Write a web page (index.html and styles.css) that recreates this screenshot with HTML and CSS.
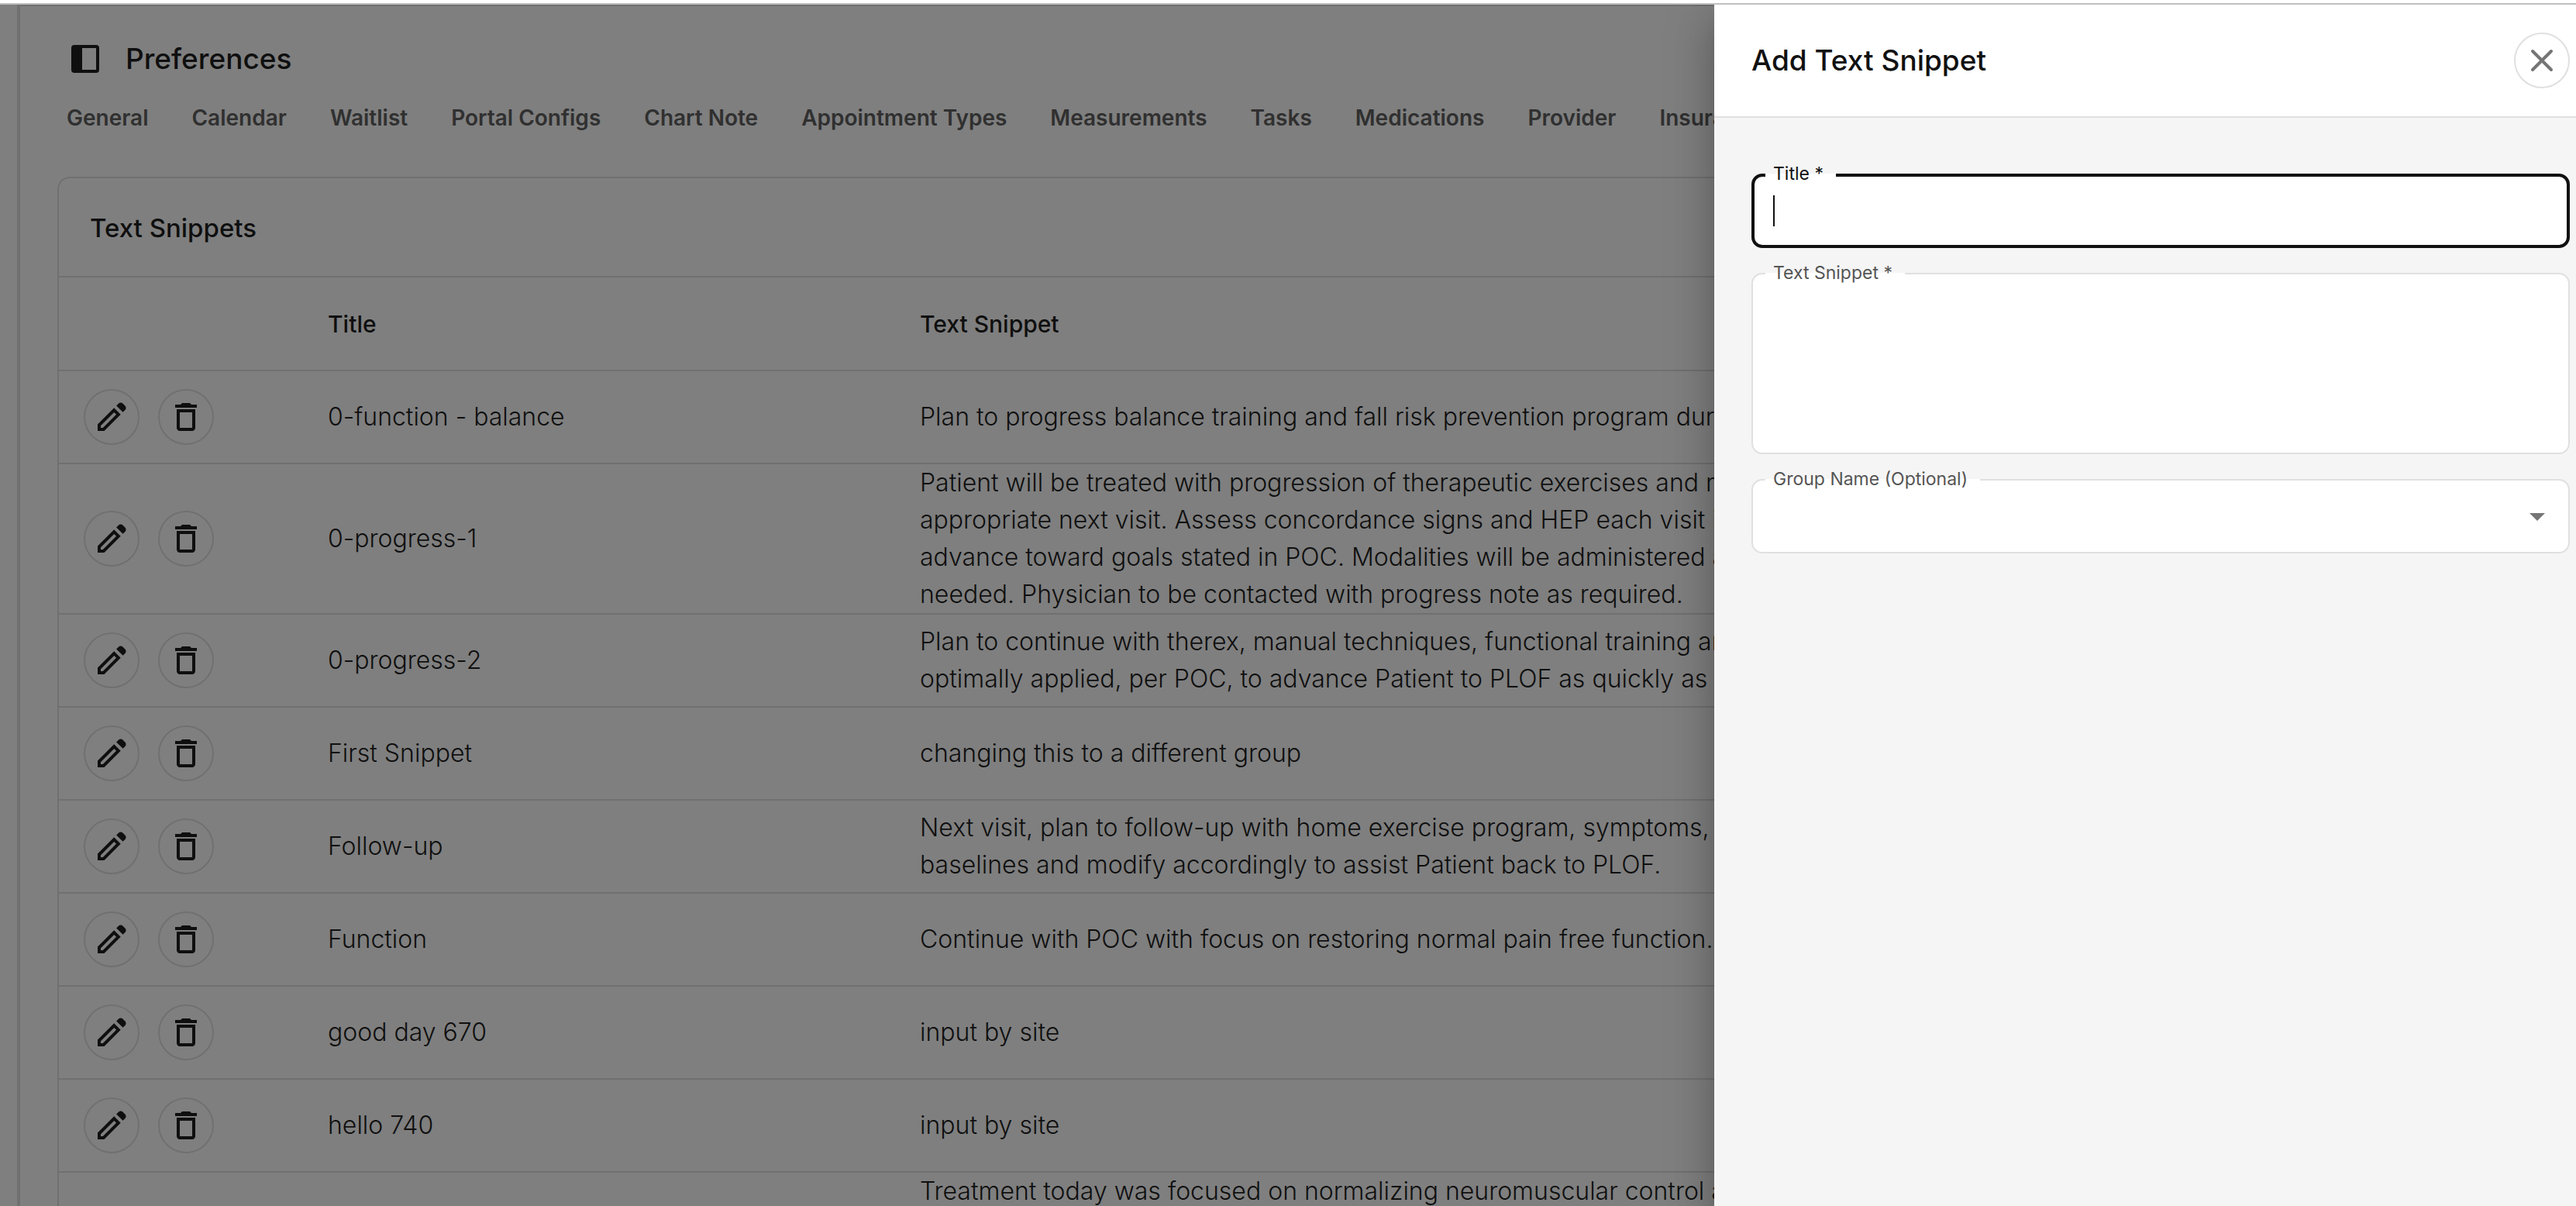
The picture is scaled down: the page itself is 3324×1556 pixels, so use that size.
FILE: index.html
```html
<!DOCTYPE html>
<html lang="en">

<head>
  <meta charset="UTF-8" />
  <meta name="viewport" content="width=device-width, initial-scale=1.0" />
  <title>Preferences - Text Snippets</title>
  <link rel="stylesheet" href="styles.css">
</head>

<body>
  <!-- Icons shared by the rows -->
  <svg class="icon-defs" aria-hidden="true">
    <symbol id="icon-panel" viewBox="0 0 24 24">
      <path fill-rule="evenodd" d="M5 3h14a2 2 0 0 1 2 2v14a2 2 0 0 1-2 2H5a2 2 0 0 1-2-2V5a2 2 0 0 1 2-2ZM10 5v14h9V5Z" />
    </symbol>
    <symbol id="icon-edit" viewBox="0 0 24 24">
      <path d="M5 19h1.400l8.625-8.625-1.400-1.400L5 17.600ZM19.300 8.925l-4.250-4.200 1.400-1.400q.575-.575 1.413-.575.837 0 1.412.575l1.400 1.400q.575.575.6 1.388.025.812-.55 1.387ZM17.850 10.400 7.250 21H3v-4.250l10.600-10.600Z" />
    </symbol>
    <symbol id="icon-delete" viewBox="0 0 24 24">
      <path d="M6 19c0 1.100.9 2 2 2h8c1.100 0 2-.9 2-2V7H6v12zM8 9h8v10H8V9zm7.500-5-1-1h-5l-1 1H5v2h14V4z" />
    </symbol>
  </svg>

  <div class="app">
    <main class="page">
      <header class="page-header">
        <button class="panel-button" type="button" aria-label="Toggle sidebar">
          <svg class="icon"><use href="#icon-panel" /></svg>
        </button>
        <h1 class="page-title">Preferences</h1>
      </header>

      <nav class="tabs">
        <a href="#">General</a>
        <a href="#">Calendar</a>
        <a href="#">Waitlist</a>
        <a href="#">Portal Configs</a>
        <a href="#">Chart Note</a>
        <a href="#">Appointment Types</a>
        <a href="#">Measurements</a>
        <a href="#">Tasks</a>
        <a href="#">Medications</a>
        <a href="#">Provider</a>
        <a href="#">Insurance</a>
      </nav>

      <section class="card">
        <h2 class="card-title">Text Snippets</h2>
        <table class="snippets">
          <colgroup>
            <col class="col-actions">
            <col class="col-title">
            <col>
          </colgroup>
          <thead>
            <tr>
              <th></th>
              <th>Title</th>
              <th>Text Snippet</th>
            </tr>
          </thead>
          <tbody>
            <tr>
              <td>
                <div class="actions">
                  <button class="round-button" type="button" aria-label="Edit"><svg class="icon"><use href="#icon-edit" /></svg></button>
                  <button class="round-button" type="button" aria-label="Delete"><svg class="icon"><use href="#icon-delete" /></svg></button>
                </div>
              </td>
              <td>0-function - balance</td>
              <td>Plan to progress balance training and fall risk prevention program during</td>
            </tr>
            <tr>
              <td>
                <div class="actions">
                  <button class="round-button" type="button" aria-label="Edit"><svg class="icon"><use href="#icon-edit" /></svg></button>
                  <button class="round-button" type="button" aria-label="Delete"><svg class="icon"><use href="#icon-delete" /></svg></button>
                </div>
              </td>
              <td>0-progress-1</td>
              <td>Patient will be treated with progression of therapeutic exercises and manual<br>appropriate next visit. Assess concordance signs and HEP each visit in order to<br>advance toward goals stated in POC. Modalities will be administered as<br>needed. Physician to be contacted with progress note as required.</td>
            </tr>
            <tr>
              <td>
                <div class="actions">
                  <button class="round-button" type="button" aria-label="Edit"><svg class="icon"><use href="#icon-edit" /></svg></button>
                  <button class="round-button" type="button" aria-label="Delete"><svg class="icon"><use href="#icon-delete" /></svg></button>
                </div>
              </td>
              <td>0-progress-2</td>
              <td>Plan to continue with therex, manual techniques, functional training and<br>optimally applied, per POC, to advance Patient to PLOF as quickly as possible.</td>
            </tr>
            <tr>
              <td>
                <div class="actions">
                  <button class="round-button" type="button" aria-label="Edit"><svg class="icon"><use href="#icon-edit" /></svg></button>
                  <button class="round-button" type="button" aria-label="Delete"><svg class="icon"><use href="#icon-delete" /></svg></button>
                </div>
              </td>
              <td>First Snippet</td>
              <td>changing this to a different group</td>
            </tr>
            <tr>
              <td>
                <div class="actions">
                  <button class="round-button" type="button" aria-label="Edit"><svg class="icon"><use href="#icon-edit" /></svg></button>
                  <button class="round-button" type="button" aria-label="Delete"><svg class="icon"><use href="#icon-delete" /></svg></button>
                </div>
              </td>
              <td>Follow-up</td>
              <td>Next visit, plan to follow-up with home exercise program, symptoms, ROM<br>baselines and modify accordingly to assist Patient back to PLOF.</td>
            </tr>
            <tr>
              <td>
                <div class="actions">
                  <button class="round-button" type="button" aria-label="Edit"><svg class="icon"><use href="#icon-edit" /></svg></button>
                  <button class="round-button" type="button" aria-label="Delete"><svg class="icon"><use href="#icon-delete" /></svg></button>
                </div>
              </td>
              <td>Function</td>
              <td>Continue with POC with focus on restoring normal pain free function.</td>
            </tr>
            <tr>
              <td>
                <div class="actions">
                  <button class="round-button" type="button" aria-label="Edit"><svg class="icon"><use href="#icon-edit" /></svg></button>
                  <button class="round-button" type="button" aria-label="Delete"><svg class="icon"><use href="#icon-delete" /></svg></button>
                </div>
              </td>
              <td>good day 670</td>
              <td>input by site</td>
            </tr>
            <tr>
              <td>
                <div class="actions">
                  <button class="round-button" type="button" aria-label="Edit"><svg class="icon"><use href="#icon-edit" /></svg></button>
                  <button class="round-button" type="button" aria-label="Delete"><svg class="icon"><use href="#icon-delete" /></svg></button>
                </div>
              </td>
              <td>hello 740</td>
              <td>input by site</td>
            </tr>
            <tr class="row-long">
              <td></td>
              <td></td>
              <td>Treatment today was focused on normalizing neuromuscular control and</td>
            </tr>
          </tbody>
        </table>
      </section>
    </main>

    <div class="backdrop"></div>

    <!-- Add snippet drawer -->
    <aside class="drawer" role="dialog" aria-labelledby="drawer-title">
      <header class="drawer-header">
        <h2 class="drawer-title" id="drawer-title">Add Text Snippet</h2>
        <button class="round-button close-button" type="button" aria-label="Close">
          <svg class="icon" viewBox="0 0 24 24"><path d="M6 6l12 12M18 6 6 18" /></svg>
        </button>
      </header>

      <form class="drawer-form">
        <div class="field focused">
          <label for="snippet-title">Title *</label>
          <input type="text" id="snippet-title" required>
          <span class="caret"></span>
        </div>
        <div class="field">
          <label for="snippet-text">Text Snippet *</label>
          <textarea id="snippet-text" required></textarea>
        </div>
        <div class="field">
          <label for="snippet-group">Group Name (Optional)</label>
          <select id="snippet-group">
            <option value=""></option>
          </select>
          <svg class="icon select-arrow" viewBox="0 0 24 24" aria-hidden="true"><path d="M7 10l5 5 5-5z" /></svg>
        </div>
      </form>
    </aside>
  </div>
</body>

</html>
```
FILE: styles.css
```css
*,
*::after,
*::before {
  margin: 0;
  padding: 0;
  box-sizing: border-box;
}

body {
  height: 100vh;
  padding-top: 4px;
  overflow: hidden;
  background-color: #fff;
  font-family: 'Inter', sans-serif;
  font-size: 32px;
  line-height: 48px;
  color: #1e1e1e;
}

button,
input,
textarea,
select {
  font: inherit;
  color: inherit;
}

.icon-defs {
  display: none;
}

.icon {
  display: block;
  width: 48px;
  height: 48px;
  fill: currentColor;
}

.app {
  position: relative;
  height: 100%;
  border-top: 2px solid #c0c0c0;
  overflow: hidden;
}

/* Page behind the drawer */
.page {
  height: 100%;
  margin-left: 22px;
  padding: 44px 48px 0;
  border-top: 2px solid #e0e0e0;
  border-left: 4px solid #e0e0e0;
  overflow: hidden;
}

.page-header {
  display: flex;
  align-items: center;
  gap: 28px;
  padding-left: 12px;
}

.panel-button {
  border: none;
  background: none;
  cursor: pointer;
}

.page-title {
  font-size: 37px;
  font-weight: 500;
}

.tabs {
  display: flex;
  gap: 56px;
  margin-top: 28px;
  padding-left: 12px;
  white-space: nowrap;
}

.tabs a {
  font-size: 28px;
  font-weight: 600;
  color: #616161;
  text-decoration: none;
}

.card {
  margin-top: 52px;
  border: 2px solid #e0e0e0;
  border-radius: 16px;
}

.card-title {
  padding: 40px 40px 38px;
  border-bottom: 2px solid #e0e0e0;
  font-size: 33px;
  font-weight: 500;
}

.snippets {
  width: 100%;
  table-layout: fixed;
  border-spacing: 0;
  text-align: left;
}

.col-actions {
  width: 315px;
}

.col-title {
  width: 764px;
}

.snippets th,
.snippets td {
  height: 120px;
  padding: 0 32px;
  border-bottom: 2px solid #e0e0e0;
  font-weight: 300;
  vertical-align: middle;
  white-space: nowrap;
}

.snippets th {
  height: 121px;
  font-size: 30px;
  font-weight: 500;
}

.snippets .row-long td {
  height: 194px;
  vertical-align: top;
}

.actions {
  display: flex;
  gap: 24px;
}

.round-button {
  display: flex;
  align-items: center;
  justify-content: center;
  width: 72px;
  height: 72px;
  border: 2px solid #e0e0e0;
  border-radius: 50%;
  background: none;
  cursor: pointer;
}

.backdrop {
  position: absolute;
  inset: 0;
  background-color: rgba(0, 0, 0, 0.5);
}

/* Drawer */
.drawer {
  position: absolute;
  top: 0;
  right: 0;
  bottom: 0;
  width: 1112px;
  max-width: 100%;
  background-color: #f5f5f5;
  box-shadow: 0 16px 20px -10px rgba(0, 0, 0, 0.2), 0 32px 48px 4px rgba(0, 0, 0, 0.14), 0 12px 60px 10px rgba(0, 0, 0, 0.12);
}

.drawer-header {
  display: flex;
  align-items: center;
  justify-content: space-between;
  padding: 36px 8px 36px 48px;
  border-bottom: 2px solid #e0e0e0;
  background-color: #fff;
}

.drawer-title {
  font-size: 37px;
  font-weight: 500;
  color: #111;
}

.close-button .icon {
  fill: none;
  stroke: #757575;
  stroke-width: 2;
  stroke-linecap: round;
}

.drawer-form {
  display: flex;
  flex-direction: column;
  gap: 32px;
  padding: 72px 8px 0 48px;
}

.field {
  position: relative;
}

.field label {
  position: absolute;
  top: -16px;
  left: 18px;
  padding: 0 16px 0 10px;
  /* lower half takes the white of the field */
  background: linear-gradient(#f5f5f5 50%, #fff 50%);
  font-size: 23px;
  line-height: 32px;
  color: #555;
}

.field input,
.field textarea,
.field select {
  display: block;
  width: 100%;
  height: 96px;
  padding: 22px 26px;
  border: 2px solid #e0e0e0;
  border-radius: 14px;
  background-color: #fff;
  outline: none;
  appearance: none;
}

.field textarea {
  height: 234px;
  resize: none;
}

.field.focused label {
  color: #111;
}

.field.focused input {
  border: 4px solid #111;
}

.caret {
  position: absolute;
  top: 28px;
  left: 28px;
  width: 2px;
  height: 40px;
  background-color: #111;
}

.select-arrow {
  position: absolute;
  top: 24px;
  right: 18px;
  color: #757575;
  pointer-events: none;
}
```
